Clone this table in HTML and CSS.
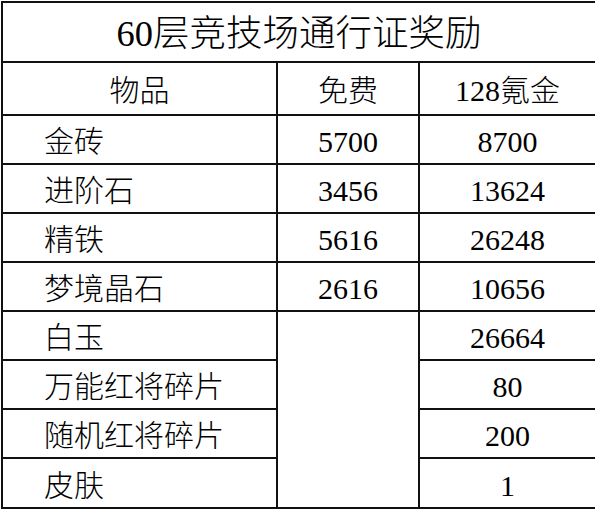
FILE: index.html
```html
<!DOCTYPE html>
<html lang="zh">
<head>
<meta charset="utf-8">
<link rel="stylesheet" href="styles.css">
</head>
<body>
<table class="reward">
  <colgroup>
    <col class="c-item">
    <col class="c-free">
    <col class="c-paid">
  </colgroup>
  <tr class="title-row"><td colspan="3" class="title">60层竞技场通行证奖励</td></tr>
  <tr class="head-row"><td class="ctr">物品</td><td class="ctr">免费</td><td class="ctr">128氪金</td></tr>
  <tr class="row"><td class="name">金砖</td><td class="ctr">5700</td><td class="ctr">8700</td></tr>
  <tr class="row"><td class="name">进阶石</td><td class="ctr">3456</td><td class="ctr">13624</td></tr>
  <tr class="row"><td class="name">精铁</td><td class="ctr">5616</td><td class="ctr">26248</td></tr>
  <tr class="row"><td class="name">梦境晶石</td><td class="ctr">2616</td><td class="ctr">10656</td></tr>
  <tr class="row"><td class="name">白玉</td><td class="ctr" rowspan="4"></td><td class="ctr">26664</td></tr>
  <tr class="row"><td class="name">万能红将碎片</td><td class="ctr">80</td></tr>
  <tr class="row"><td class="name">随机红将碎片</td><td class="ctr">200</td></tr>
  <tr class="row-last"><td class="name">皮肤</td><td class="ctr">1</td></tr>
</table>
</body>
</html>
```
FILE: styles.css
```css
html, body {
  margin: 0;
  padding: 0;
  background: #ffffff;
}
body {
  padding: 1px 0 0 1px;
}
.reward {
  border-collapse: collapse;
  table-layout: fixed;
  width: 594px;
  font-family: "Liberation Serif", "Noto Sans CJK SC", serif;
  font-weight: 300;
  color: #000;
}
.c-item { width: 275px; }
.c-free { width: 142px; }
.c-paid { width: 177px; }
.reward td {
  border: 2px solid #111;
  padding: 0;
  font-size: 30px;
  line-height: 30px;
  vertical-align: middle;
}
.title-row { height: 60px; }
.head-row { height: 53px; }
.row { height: 49px; }
.row-last { height: 50px; }
.reward .title {
  text-align: center;
  font-size: 36.5px;
  line-height: 36px;
  padding-top: 4px;
}
.reward .ctr {
  text-align: center;
  padding-top: 5px;
}
.reward .name {
  text-align: left;
  padding-left: 41px;
  padding-top: 5px;
}
```
